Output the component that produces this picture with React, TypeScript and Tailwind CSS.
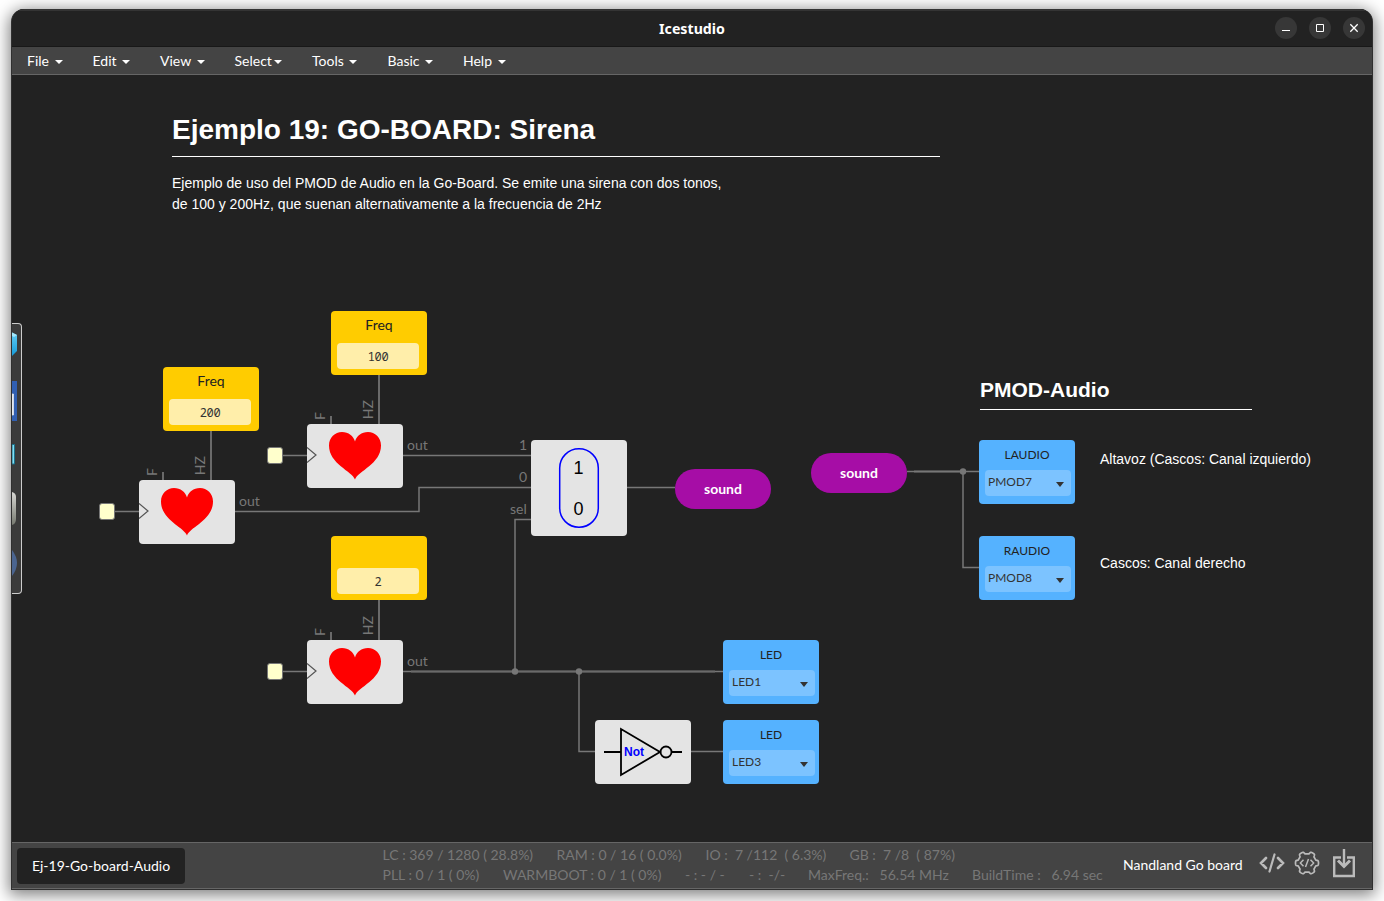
import React from 'react';

const menus = [
  { label: 'File', w: 'w-[65.5px]', gap: 'gap-[6px]' },
  { label: 'Edit', w: 'w-[67.5px]', gap: 'gap-[5px]' },
  { label: 'View', w: 'w-[74.5px]', gap: 'gap-[5.5px]' },
  { label: 'Select', w: 'w-[77.5px]', gap: 'gap-[2px]' },
  { label: 'Tools', w: 'w-[75.5px]', gap: 'gap-[5px]' },
  { label: 'Basic', w: 'w-[75.5px]', gap: 'gap-[5px]' },
  { label: 'Help', w: 'w-[70px]', gap: 'gap-[6px]' },
];

const statsTop = [
  { text: 'LC : 369 / 1280 ( 28.8%)', w: 'w-[174px]' },
  { text: 'RAM : 0 / 16 ( 0.0%)', w: 'w-[149px]' },
  { text: 'IO :  7 /112  ( 6.3%)', w: 'w-[144px]' },
  { text: 'GB :  7 /8  ( 87%)', w: 'w-[120px]' },
];

const statsBottom = [
  { text: 'PLL : 0 / 1 ( 0%)', w: 'w-[120.5px]' },
  { text: 'WARMBOOT : 0 / 1 ( 0%)', w: 'w-[182px]' },
  { text: '- : - / -', w: 'w-[64px]' },
  { text: '- :  -/-', w: 'w-[59px]' },
  { text: 'MaxFreq.:   56.54 MHz', w: 'w-[164px]' },
  { text: 'BuildTime :   6.94 sec', w: 'w-[140px]' },
];

// Outline of a cog with six rounded teeth, centred on (13, 13).
const cogPath =
  Array.from({ length: 120 }, (_, i) => {
    const a = (i / 120) * Math.PI * 2;
    const r = 10.3 + 1.2 * Math.tanh(3.2 * Math.cos(6 * a));
    return `${i === 0 ? 'M' : 'L'}${(13 + r * Math.cos(a)).toFixed(2)} ${(13 + r * Math.sin(a)).toFixed(2)}`;
  }).join('') + 'Z';

function TitleBar() {
  return (
    <header className="flex h-[38px] shrink-0 items-center border-t-2 border-b border-t-[#343434] border-b-[#181818] bg-[#222222] pb-px pr-[7px]">
      <div className="w-[109px]" />
      <h1 className="flex-1 pt-px text-center font-['Noto_Sans',sans-serif] text-[14.2px] font-bold text-white">Icestudio</h1>
      <div className="flex w-[102px] justify-end gap-3">
        <button aria-label="Minimize" className="flex size-[22px] items-center justify-center rounded-full bg-[#373737]">
          <svg width="10" height="10" shapeRendering="crispEdges"><path d="M1 7h8v1H1z" fill="#fff" /></svg>
        </button>
        <button aria-label="Maximize" className="flex size-[22px] items-center justify-center rounded-full bg-[#373737]">
          <svg width="10" height="10"><path d="M1.5 1.5h7v7h-7z" fill="none" stroke="#fff" /></svg>
        </button>
        <button aria-label="Close" className="flex size-[22px] items-center justify-center rounded-full bg-[#373737]">
          <svg width="10" height="10"><path d="M1.3 1.3l7.4 7.4M8.7 1.3L1.3 8.7" stroke="#fff" strokeWidth="1.3" /></svg>
        </button>
      </div>
    </header>
  );
}

function MenuBar() {
  return (
    <nav className="flex h-7 shrink-0 items-center border-b border-[#666666] bg-[#444444] pl-[15px] text-[14px] text-white">
      {menus.map((m) => (
        <div key={m.label} className={`flex shrink-0 items-center ${m.w} ${m.gap}`}>
          <span>{m.label}</span>
          <svg width="8" height="4" className="mt-[2px]"><path d="M0 0h8L4 4z" fill="#fff" /></svg>
        </div>
      ))}
    </nav>
  );
}

function ConstantBlock({ pos, label, value }: { pos: string; label: string; value: string }) {
  return (
    <div className={`absolute flex h-16 w-24 flex-col rounded-[4px] bg-[#ffcc00] pl-[6px] ${pos}`}>
      <div className="h-8 pr-[6px] pt-[4px] text-center text-[14px] leading-5 text-[#222222]">{label}</div>
      <div className="h-[26px] w-[82px] rounded-[4px] bg-[#ffeeaa] text-center font-['Noto_Sans_Mono','DejaVu_Sans_Mono','Liberation_Mono',monospace] text-[12px] leading-[27px] tracking-[-0.3px] text-[#333333]">{value}</div>
    </div>
  );
}

function HeartBlock({ pos }: { pos: string }) {
  return (
    <div className={`absolute h-16 w-24 rounded-[4px] bg-[#e4e4e4] ${pos}`}>
      <svg width="96" height="64" viewBox="0 0 96 64">
        <path d="M0 23.5L9 31L0 38.5" fill="none" stroke="#555" strokeWidth="1.2" />
        <path d="M48 55.5C45 47 22 40 22 21.5C22 13.5 28 8 35 8C41.500 8 46.500 12 48 17.500C49.500 12 54.500 8 61 8C68 8 74 13.500 74 21.500C74 40 51 47 48 55.500Z" fill="#ff0000" />
      </svg>
    </div>
  );
}

function OutputBlock({ pos, label, pin }: { pos: string; label: string; pin: string }) {
  return (
    <div className={`absolute flex h-16 w-24 flex-col rounded-[4px] bg-[#55b2ff] px-[6px] text-[#222222] ${pos}`}>
      <div className="h-[30px] pt-[5px] text-center text-[12px] leading-5">{label}</div>
      <div className="flex h-[26px] w-[86px] items-center justify-between rounded-[4px] bg-[#7cc3ff] pl-[3px] pr-[7px] text-[12px] leading-5 text-[#333333]">
        <span className="-mt-[2px]">{pin}</span>
        <svg width="8" height="5" className="mt-[3px]"><path d="M0 0h8L4 5z" fill="#333" /></svg>
      </div>
    </div>
  );
}

function LabelBlock({ pos }: { pos: string }) {
  return (
    <div className={`absolute flex h-10 w-24 items-center justify-center rounded-full bg-[#a60da6] pb-[2px] text-[14px] font-bold text-white ${pos}`}>
      sound
    </div>
  );
}

function ClockInput({ pos }: { pos: string }) {
  return <div className={`absolute h-[17px] w-4 rounded-[3px] border border-[#777777] bg-[#ffffcc] ${pos}`} />;
}

function PortLabel({ pos, children }: { pos: string; children: string }) {
  return <span className={`absolute text-[14px] leading-5 text-[#777777] ${pos}`}>{children}</span>;
}

function Wires() {
  return (
    <svg className="absolute inset-0" width="1360" height="767" viewBox="12 75 1360 767" fill="none" stroke="#777777" strokeWidth="1.5">
      <path d="M211 431V480M379 375V424M379 600V640" strokeWidth="2" stroke="#6a6a6a" />
      <path d="M163 472V480M331 416V424M331 632V640" strokeWidth="2" stroke="#6a6a6a" />
      <path d="M115 511.500H139M283 455.500H307M283 671.500H307" />
      <path d="M403 455.500H531M235 511.500H419V487.500H531M627 487.500H675" />
      <path d="M403 671.500H723M515 671.500V519.500H531M579 671.500V751.500H595M691 751.500H723" />
      <path d="M411 671.500H715M914 471.500H963" strokeWidth="2" stroke="#6a6a6a" />
      <path d="M907 471.500H979M963 471.500V567.500H979" />
      <g fill="#777777" stroke="none">
        <circle cx="515" cy="671.500" r="3.200" />
        <circle cx="579" cy="671.500" r="3.200" />
        <circle cx="963" cy="471.500" r="3.200" />
      </g>
    </svg>
  );
}

function ToolboxEdge() {
  return (
    <aside className="absolute left-0 top-[248px] h-[271px] w-[10px] rounded-r-[4px] border border-l-0 border-[#cccccc] bg-[#3b3b3b]">
      <svg width="9" height="269" viewBox="0 0 9 269">
        <defs>
          <linearGradient id="cube" x1="0" y1="0" x2="0" y2="1"><stop stopColor="#63ccf3" /><stop offset="1" stopColor="#159bd9" /></linearGradient>
          <linearGradient id="metal" x1="0" y1="0" x2="0" y2="1"><stop stopColor="#d8d8d4" /><stop offset="1" stopColor="#767970" /></linearGradient>
        </defs>
        <path d="M0 8.500L5 11V27L0 32Z" fill="url(#cube)" />
        <path d="M0 8.500L5 11L2 13L0 12Z" fill="#a5e7fb" />
        <path d="M0 57H5V97H0Z" fill="#315fb2" />
        <path d="M0 70H1.500V91H0" fill="#e5e9ef" stroke="#dfe4ec" strokeWidth=".8" />
        <path d="M0 120.500H2.500V140H0Z" fill="#83dcf0" stroke="#1b718a" />
        <path d="M0 168Q4 169 4 173V195Q4 200 0 201Z" fill="url(#metal)" />
        <path d="M0 226Q10 239 0 252Z" fill="#4b6590" />
      </svg>
    </aside>
  );
}

function Canvas() {
  return (
    <main className="relative h-[767px] shrink-0 overflow-hidden bg-[#222222]">
      <Wires />
      <ToolboxEdge />

      <section className="absolute left-[160px] top-[37px] w-[768px] font-['Liberation_Sans',Arial,sans-serif] text-white">
        <h2 className="h-[45px] border-b border-white text-[28px] font-bold leading-[35px]">Ejemplo 19: GO-BOARD: Sirena</h2>
        <p className="mt-[16px] text-[14px] leading-[21px]">
          Ejemplo de uso del PMOD de Audio en la Go-Board. Se emite una sirena con dos tonos,
          <br />
          de 100 y 200Hz, que suenan alternativamente a la frecuencia de 2Hz
        </p>
      </section>
      <h3 className="absolute left-[968px] top-[302px] h-[33px] w-[272px] border-b border-white font-['Liberation_Sans',Arial,sans-serif] text-[21px] font-bold leading-[26px] text-white">PMOD-Audio</h3>
      <p className="absolute left-[1088px] top-[374px] font-['Liberation_Sans',Arial,sans-serif] text-[14px] leading-[21px] text-white">Altavoz (Cascos: Canal izquierdo)</p>
      <p className="absolute left-[1088px] top-[478px] font-['Liberation_Sans',Arial,sans-serif] text-[14px] leading-[21px] text-white">Cascos: Canal derecho</p>

      <ConstantBlock pos="left-[319px] top-[236px]" label="Freq" value="100" />
      <ConstantBlock pos="left-[151px] top-[292px]" label="Freq" value="200" />
      <ConstantBlock pos="left-[319px] top-[461px]" label="" value="2" />
      <ClockInput pos="left-[255px] top-[372px]" />
      <ClockInput pos="left-[87px] top-[428px]" />
      <ClockInput pos="left-[255px] top-[588px]" />
      <HeartBlock pos="left-[295px] top-[349px]" />
      <HeartBlock pos="left-[127px] top-[405px]" />
      <HeartBlock pos="left-[295px] top-[565px]" />

      <div className="absolute left-[519px] top-[365px] flex size-24 items-center justify-center rounded-[4px] bg-[#e4e4e4]">
        <svg width="96" height="96" viewBox="0 0 96 96">
          <rect x="28.7" y="8.700" width="38.600" height="78.600" rx="19.300" fill="none" stroke="#0000ff" strokeWidth="1.500" />
          <text x="47.500" y="34" textAnchor="middle" fontFamily="Liberation Sans" fontSize="18">1</text>
          <text x="47.500" y="75" textAnchor="middle" fontFamily="Liberation Sans" fontSize="18">0</text>
        </svg>
      </div>
      <div className="absolute left-[583px] top-[645px] h-16 w-24 rounded-[4px] bg-[#e4e4e4]">
        <svg width="96" height="64" viewBox="0 0 96 64">
          <path d="M9 32H26M26 9V55L65 32ZM77 32H87" fill="none" stroke="#000" strokeWidth="1.8" />
          <circle cx="71" cy="32" r="5.500" fill="none" stroke="#000" strokeWidth="1.800" />
          <text x="29" y="36" fill="#0000ff" fontFamily="Liberation Sans" fontWeight="bold" fontSize="12">Not</text>
        </svg>
      </div>

      <LabelBlock pos="left-[663px] top-[394px]" />
      <LabelBlock pos="left-[799px] top-[378px]" />
      <OutputBlock pos="left-[967px] top-[365px]" label="LAUDIO" pin="PMOD7" />
      <OutputBlock pos="left-[967px] top-[461px]" label="RAUDIO" pin="PMOD8" />
      <OutputBlock pos="left-[711px] top-[565px]" label="LED" pin="LED1" />
      <OutputBlock pos="left-[711px] top-[645px]" label="LED" pin="LED3" />

      <PortLabel pos="left-[395px] top-[360px]">out</PortLabel>
      <PortLabel pos="left-[227px] top-[416px]">out</PortLabel>
      <PortLabel pos="left-[395px] top-[576px]">out</PortLabel>
      <PortLabel pos="left-[507px] top-[360px]">1</PortLabel>
      <PortLabel pos="left-[507px] top-[392px]">0</PortLabel>
      <PortLabel pos="left-[498px] top-[424px]">sel</PortLabel>
      <PortLabel pos="left-[130px] top-[393px] [writing-mode:vertical-rl] rotate-180">F</PortLabel>
      <PortLabel pos="left-[178px] top-[381px] [writing-mode:vertical-rl] rotate-180">HZ</PortLabel>
      <PortLabel pos="left-[298px] top-[337px] [writing-mode:vertical-rl] rotate-180">F</PortLabel>
      <PortLabel pos="left-[346px] top-[325px] [writing-mode:vertical-rl] rotate-180">HZ</PortLabel>
      <PortLabel pos="left-[298px] top-[553px] [writing-mode:vertical-rl] rotate-180">F</PortLabel>
      <PortLabel pos="left-[346px] top-[541px] [writing-mode:vertical-rl] rotate-180">HZ</PortLabel>
    </main>
  );
}

function StatusBar() {
  return (
    <footer className="flex h-[47px] shrink-0 border-y border-[#666666] bg-[#444444] text-[14px]">
      <div className="ml-[5px] mt-[5px] flex h-9 w-[168px] shrink-0 items-center justify-center rounded-[4px] bg-[#222222] pb-[2px] text-white">Ej-19-Go-board-Audio</div>
      <div className="ml-[197.500px] mt-[2px] w-[740.500px] shrink-0 whitespace-pre leading-5 text-[#777777]">
        <div className="flex">
          {statsTop.map((s) => <span key={s.text} className={`shrink-0 ${s.w}`}>{s.text}</span>)}
        </div>
        <div className="flex">
          {statsBottom.map((s) => <span key={s.text} className={`shrink-0 ${s.w}`}>{s.text}</span>)}
        </div>
      </div>
      <div className="mt-[12px] w-[136px] shrink-0 leading-5 text-white">Nandland Go board</div>
      <svg className="mt-[10px] shrink-0" width="26" height="20" viewBox="0 0 26 20" fill="none" stroke="#bbbbbb" strokeWidth="2.600" strokeLinecap="round">
        <path d="M7 5L2 10L7 15M19 5L24 10L19 15" />
        <path d="M15.500 1.500L10.500 18.500" strokeWidth="2.200" />
      </svg>
      <svg className="ml-[9px] mt-[7px] shrink-0" width="26" height="26" viewBox="0 0 26 26" fill="none" stroke="#bbbbbb" strokeWidth="1.700" strokeLinejoin="round">
        <path d={cogPath} />
        <path d="M9.500 9.800L6.300 13L9.500 16.200M16.500 9.800L19.700 13L16.500 16.200M14.500 9L11.500 17" strokeWidth="1.500" />
      </svg>
      <svg className="ml-[12.500px] mt-[6px] shrink-0" width="22" height="29" viewBox="0 0 22 29" fill="none" stroke="#bbbbbb" strokeWidth="2.400">
        <path d="M8 8.500H1.200V27H20.800V8.500H14M11 0V17" />
        <path d="M5 11.500L11 17.500L17 11.500" strokeWidth="3" />
      </svg>
    </footer>
  );
}

export default function App() {
  return (
    <div className="h-[901px] w-[1384px] overflow-hidden bg-white pl-[11px] pt-[9px] font-['Lato',sans-serif] antialiased">
      <div className="flex h-[881px] w-[1362px] flex-col overflow-hidden rounded-t-[13px] border-x border-b border-[#303030] bg-[#222222] shadow-[0_3px_16px_2px_rgba(0,0,0,0.5)]">
        <TitleBar />
        <MenuBar />
        <Canvas />
        <StatusBar />
      </div>
    </div>
  );
}
